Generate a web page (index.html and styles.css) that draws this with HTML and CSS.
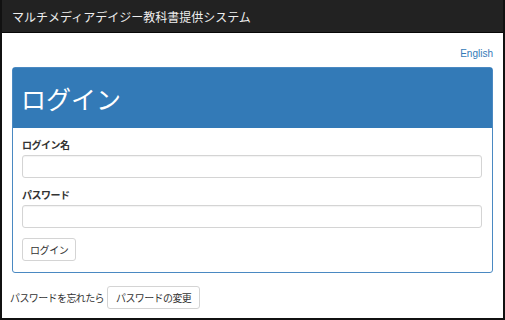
FILE: index.html
```html
<!DOCTYPE html>
<html lang="ja">
<head>
  <meta charset="utf-8">
  <title>ログイン</title>
  <link rel="stylesheet" href="styles.css">
</head>
<body>
  <!-- Top navigation bar -->
  <div class="navbar">
    <span class="brand">マルチメディアデイジー教科書提供システム</span>
  </div>

  <div class="container">
    <div class="lang-row">
      <a href="#" class="lang-link">English</a>
    </div>

    <!-- Login panel -->
    <div class="panel">
      <div class="panel-heading">
        <h1>ログイン</h1>
      </div>
      <div class="panel-body">
        <div class="form-group">
          <label for="loginName">ログイン名</label>
          <input type="text" id="loginName" class="form-control">
        </div>
        <div class="form-group">
          <label for="password">パスワード</label>
          <input type="password" id="password" class="form-control">
        </div>
        <button class="btn">ログイン</button>
      </div>
    </div>

    <div class="forgot-row">
      <span>パスワードを忘れたら</span>
      <button class="btn">パスワードの変更</button>
    </div>
  </div>
</body>
</html>
```

FILE: styles.css
```css
html, body {
  height: 100%;
}

body {
  margin: 0;
  box-sizing: border-box;
  border: 2px solid #111;
  border-top: none;
  font-family: "Noto Sans CJK JP", "Noto Sans", sans-serif;
  font-size: 10px;
  color: #333;
  background-color: #fff;
}

.navbar {
  height: 33px;
  background-color: #222;
  border-bottom: 1px solid #080808;
  box-sizing: border-box;
  display: flex;
  align-items: center;
  padding: 0 10px;
}

.brand {
  color: #eee;
  font-size: 12px;
}

.container {
  padding: 13px 10px 0 10px;
}

.lang-row {
  text-align: right;
  line-height: 14px;
  margin-bottom: 6px;
}

.lang-link {
  color: #337ab7;
  text-decoration: none;
  font-family: "Liberation Sans", Arial, sans-serif;
  font-size: 10px;
}

.panel {
  border: 1px solid #4a89c2;
  border-radius: 3px;
}

.panel-heading {
  background-color: #337ab7;
  height: 60px;
  display: flex;
  align-items: center;
  padding: 0 8px;
}

.panel-heading h1 {
  margin: 0;
  color: #fff;
  font-size: 25px;
  font-weight: normal;
}

.panel-body {
  padding: 10px 10px 11px 9px;
}

.form-group {
  margin-bottom: 10px;
}

.form-group label {
  display: block;
  font-weight: bold;
  line-height: 14px;
  margin-bottom: 3px;
  letter-spacing: -0.5px;
}

.form-control {
  display: block;
  width: 100%;
  height: 23px;
  box-sizing: border-box;
  border: 1px solid #d4d4d4;
  border-radius: 3px;
  box-shadow: inset 0 1px 1px rgba(0, 0, 0, 0.05);
}

.btn {
  height: 23px;
  padding: 0 7px;
  background-color: #fff;
  border: 1px solid #d4d4d4;
  border-radius: 3px;
  font-family: inherit;
  font-size: 10px;
  color: #333;
  letter-spacing: -0.4px;
}

.forgot-row {
  margin-top: 13px;
  display: flex;
  align-items: center;
  gap: 3px;
  margin-left: -2px;
  letter-spacing: -0.6px;
}

.forgot-row .btn {
  letter-spacing: -0.6px;
  padding: 0 8px;
}
```
